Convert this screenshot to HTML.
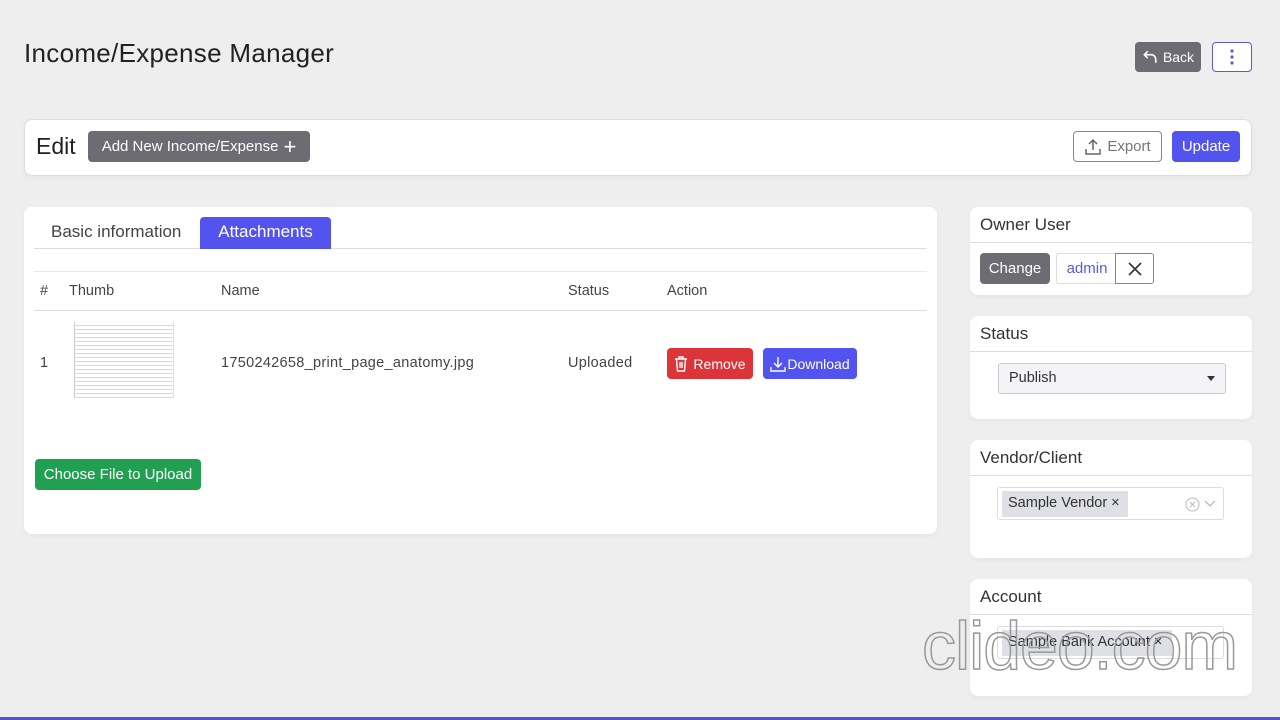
<!DOCTYPE html>
<html><head><meta charset="utf-8"><style>
*{box-sizing:border-box;margin:0;padding:0}
body{width:1280px;height:720px;background:#eeeeee;font-family:"Liberation Sans",sans-serif;color:#333;position:relative;overflow:hidden}
.a{position:absolute}
.card{position:absolute;background:#fff;border-radius:8px;box-shadow:0 2px 6px rgba(0,0,0,.04)}
.btn{position:absolute;border-radius:4px;font-size:15px;display:flex;align-items:center;justify-content:center;gap:5px}
.hd{position:absolute;left:0;right:0;height:36px;border-bottom:1px solid #ddd;font-size:17px;color:#333;padding:8px 10px}
.t{font-size:14.5px;color:#444}
</style></head><body>
<div class="a" style="left:24px;top:38px;font-size:26px;color:#222;letter-spacing:0.3px">Income/Expense Manager</div>
<div class="btn" style="left:1135px;top:42px;width:66px;height:30px;background:#6c6c72;color:#fff;font-size:14px">
<svg width="16" height="16" viewBox="0 0 14 14" fill="none" stroke="#fff" stroke-width="1.4"><path d="M5 2L2 5l3 3M2 5h6a4 4 0 014 4v3"/></svg>Back</div>
<div class="btn" style="left:1212px;top:42px;width:40px;height:30px;border:1px solid #5b5bd6;background:#fff">
<svg width="4" height="16"><circle cx="2" cy="2" r="1.6" fill="#5b5bd6"/><circle cx="2" cy="8" r="1.6" fill="#5b5bd6"/><circle cx="2" cy="14" r="1.6" fill="#5b5bd6"/></svg></div>

<div class="card" style="left:24px;top:119px;width:1228px;height:57px;border:1px solid #ddd">
<div class="a" style="left:11px;top:13px;font-size:23px;color:#222">Edit</div>
<div class="btn" style="left:63px;top:11px;width:222px;height:31px;background:#6c6c72;color:#fff">Add New Income/Expense <span style="font-size:22px;font-weight:300;line-height:1">+</span></div>
<div class="btn" style="left:1048px;top:11px;width:89px;height:31px;border:1px solid #888;color:#777;background:#fff">
<svg width="18" height="18" viewBox="0 0 18 18" fill="none" stroke="#666" stroke-width="1.5"><path d="M9 12V2M5 6l4-4 4 4M2 11v5h14v-5"/></svg>Export</div>
<div class="btn" style="left:1147px;top:11px;width:68px;height:31px;background:#5353f0;color:#fff">Update</div>
</div>

<div class="card" style="left:24px;top:207px;width:913px;height:327px">
<div class="a" style="left:10px;top:41px;width:893px;border-top:1px solid #ddd"></div>
<div class="a" style="left:27px;top:15px;font-size:17px;color:#444">Basic information</div>
<div class="a" style="left:176px;top:10px;width:131px;height:32px;background:#5353f0;border-radius:4px 4px 0 0;color:#fff;font-size:17px;text-align:center;line-height:30px">Attachments</div>
<div class="a" style="left:10px;top:64px;width:893px;border-top:1px solid #e8e8e8"></div>
<div class="a" style="left:10px;top:103px;width:893px;border-top:1px solid #ddd"></div>
<div class="a t" style="top:76px;left:16px">#</div>
<div class="a t" style="top:76px;left:45px">Thumb</div>
<div class="a t" style="top:76px;left:197px">Name</div>
<div class="a t" style="top:76px;left:544px">Status</div>
<div class="a t" style="top:76px;left:643px">Action</div>
<div class="a t" style="top:148px;left:16px">1</div>
<div class="a" style="top:115px;left:50px;width:100px;height:76px;background:repeating-linear-gradient(#fff 0 3px,#d8d8d8 3px 4px);border-left:1px solid #ccc;border-right:1px solid #e0e0e0"></div>
<div class="a t" style="top:148px;left:197px;letter-spacing:0.3px">1750242658_print_page_anatomy.jpg</div>
<div class="a t" style="top:148px;left:544px;letter-spacing:0.3px">Uploaded</div>
<div class="btn" style="left:643px;top:141px;width:86px;height:31px;background:#dc3539;color:#fff;font-size:14px">
<svg width="14" height="16" viewBox="0 0 14 16" fill="none" stroke="#fff" stroke-width="1.4"><path d="M1 3h12M5 3V1h4v2M2.5 3l1 12h7l1-12M6 6v6M8 6v6"/></svg>Remove</div>
<div class="btn" style="left:739px;top:141px;width:94px;height:31px;background:#5353f0;color:#fff;font-size:14px;gap:1px">
<svg width="16" height="16" viewBox="0 0 16 16" fill="none" stroke="#fff" stroke-width="1.4"><path d="M8 1v10M4 7l4 4 4-4M1 11v4h14v-4"/></svg>Download</div>
<div class="btn" style="left:11px;top:252px;width:166px;height:31px;background:#22a052;color:#fff">Choose File to Upload</div>
</div>

<div class="card" style="left:970px;top:207px;width:282px;height:88px">
<div class="hd">Owner User</div>
<div class="btn" style="left:10px;top:46px;width:70px;height:31px;background:#6c6c72;color:#fff">Change</div>
<div class="a" style="left:86px;top:46px;width:62px;height:31px;border:1px solid #ddd;color:#5b5bd6;font-size:15px;line-height:29px;text-align:center;border-radius:3px 0 0 3px">admin</div>
<div class="btn" style="left:145px;top:46px;width:39px;height:31px;border:1px solid #888;border-radius:0 3px 3px 0;background:#fff">
<svg width="14" height="14" stroke="#333" stroke-width="1.6"><path d="M1 1l12 12M13 1L1 13"/></svg></div>
</div>

<div class="card" style="left:970px;top:316px;width:282px;height:103px">
<div class="hd">Status</div>
<div class="a" style="left:28px;top:47px;width:228px;height:31px;border:1px solid #ccc;border-radius:3px;background:#f3f3f8;font-size:14.5px;padding:6px 10px">Publish
<span style="position:absolute;right:10px;top:12px;border:4px solid transparent;border-top:5px solid #333"></span></div>
</div>

<div class="card" style="left:970px;top:440px;width:282px;height:118px">
<div class="hd">Vendor/Client</div>
<div class="a" style="left:27px;top:47px;width:227px;height:33px;border:1px solid #ddd;border-radius:3px">
<div class="a" style="left:4px;top:3px;width:126px;height:26px;background:#dfe0e5;font-size:14.5px;padding:4px 6px;white-space:nowrap">Sample Vendor ×</div>
<svg class="a" style="left:187px;top:9px" width="15" height="15" fill="none" stroke="#bbb"><circle cx="7.5" cy="7.5" r="6.5"/><path d="M5 5l5 5M10 5l-5 5"/></svg>
<svg class="a" style="left:206px;top:11px" width="12" height="10" fill="none" stroke="#bbb" stroke-width="1.3"><path d="M1 2l5 5 5-5"/></svg>
</div>
</div>

<div class="card" style="left:970px;top:579px;width:282px;height:117px">
<div class="hd">Account</div>
<div class="a" style="left:27px;top:47px;width:227px;height:33px;border:1px solid #ddd;border-radius:3px">
<div class="a" style="left:4px;top:3px;width:170px;height:26px;background:#dfe0e5;font-size:14.5px;padding:4px 6px;white-space:nowrap">Sample Bank Account ×</div>
</div>
</div>
<div class="a" style="left:922px;top:612px;font-size:68px;color:transparent;-webkit-text-stroke:1.5px #999;letter-spacing:-1px;line-height:1">clideo.com</div>
<div class="a" style="left:0;top:717px;width:1280px;height:3px;background:#5353d6"></div>
</body></html>
